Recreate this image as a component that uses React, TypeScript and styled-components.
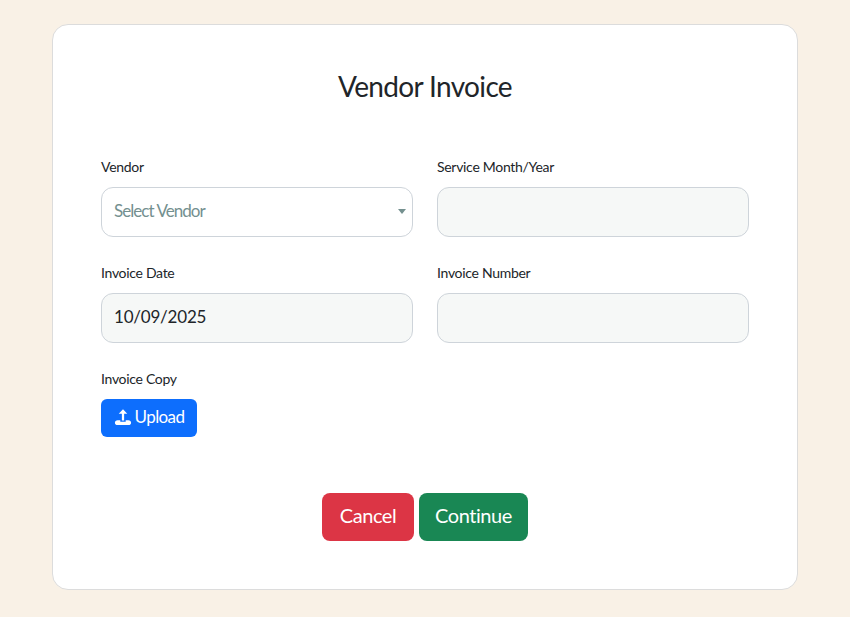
// App.tsx
import React from 'react';
import styled, { createGlobalStyle } from 'styled-components';

const GlobalStyle = createGlobalStyle`
  html, body {
    margin: 0;
    padding: 0;
    background: #f9f1e6;
    font-family: "Lato", "Liberation Sans", sans-serif;
  }
`;

const Page = styled.div`
  width: 850px;
  height: 617px;
  padding: 24px 52px 27px;
  box-sizing: border-box;
  overflow: hidden;
`;

const Card = styled.div`
  height: 566px;
  box-sizing: border-box;
  padding: 43px 48px 0;
  background: #fff;
  border: 1px solid #dcdcdc;
  border-radius: 16px;
`;

const Title = styled.h1`
  margin: 0 0 51px;
  height: 36px;
  font-size: 28px;
  line-height: 36px;
  font-weight: 400;
  letter-spacing: -0.65px;
  text-align: center;
  color: #212529;
`;

const FormGrid = styled.div`
  display: grid;
  grid-template-columns: 312px 312px;
  column-gap: 24px;
  row-gap: 24px;
`;

const Field = styled.div`
  display: flex;
  flex-direction: column;
`;

const Label = styled.label`
  height: 24px;
  margin-bottom: 8px;
  font-size: 14px;
  line-height: 24px;
  letter-spacing: -0.3px;
  color: #212529;
`;

const Input = styled.div<{ $filled?: boolean }>`
  position: relative;
  height: 50px;
  box-sizing: border-box;
  padding: 0 12px 3px;
  display: flex;
  align-items: center;
  font-size: 17px;
  letter-spacing: -0.2px;
  color: #212529;
  background: ${(p) => (p.$filled ? '#f6f8f7' : '#fff')};
  border: 1px solid #ced4da;
  border-radius: 12px;
`;

const Placeholder = styled.span`
  color: #74908f;
  font-size: 17px;
  letter-spacing: -0.95px;
`;

const Caret = styled.span`
  position: absolute;
  right: 6px;
  top: 21px;
  width: 0;
  height: 0;
  border-left: 4px solid transparent;
  border-right: 4px solid transparent;
  border-top: 5px solid #74908f;
`;

const UploadButton = styled.button`
  width: 96px;
  height: 38px;
  padding: 0 0 3px;
  display: flex;
  align-items: center;
  justify-content: center;
  gap: 3px;
  font: inherit;
  font-size: 17px;
  letter-spacing: -0.6px;
  color: #fff;
  background: #0d6efd;
  border: none;
  border-radius: 6px;
`;

const Actions = styled.div`
  display: flex;
  justify-content: center;
  gap: 5px;
  margin-top: 56px;
`;

const ActionButton = styled.button<{ $tone: string; $width: number }>`
  width: ${(p) => p.$width}px;
  height: 48px;
  padding: 0 0 4px;
  font: inherit;
  font-size: 20px;
  letter-spacing: -0.45px;
  color: #fff;
  background: ${(p) => p.$tone};
  border: none;
  border-radius: 8px;
`;

const UploadIcon = () => (
  <svg width="18" height="18" viewBox="0 0 16 16" fill="#fff">
    <path d="M8 1 L11.8 5 L9 5 L9 11 L7 11 L7 5 L4.2 5 Z" />
    <path d="M0.8 13 C0.8 11.7 1.8 10.9 3.2 10.9 L5.6 10.9 L5.6 12.2 L10.4 12.2 L10.4 10.9 L12.8 10.9 C14.2 10.9 15.2 11.7 15.2 13 C15.2 14.3 14.2 15.2 12.8 15.2 L3.2 15.2 C1.8 15.2 0.8 14.3 0.8 13 Z" />
  </svg>
);

const App: React.FC = () => {
  return (
    <Page>
      <GlobalStyle />
      <Card>
        <Title>Vendor Invoice</Title>
        <FormGrid>
          <Field>
            <Label>Vendor</Label>
            <Input>
              <Placeholder>Select Vendor</Placeholder>
              <Caret />
            </Input>
          </Field>
          <Field>
            <Label>Service Month/Year</Label>
            <Input $filled />
          </Field>
          <Field>
            <Label>Invoice Date</Label>
            <Input $filled>10/09/2025</Input>
          </Field>
          <Field>
            <Label>Invoice Number</Label>
            <Input $filled />
          </Field>
          <Field>
            <Label>Invoice Copy</Label>
            <UploadButton>
              <UploadIcon />
              Upload
            </UploadButton>
          </Field>
        </FormGrid>
        <Actions>
          <ActionButton $tone="#dc3545" $width={92}>Cancel</ActionButton>
          <ActionButton $tone="#198754" $width={109}>Continue</ActionButton>
        </Actions>
      </Card>
    </Page>
  );
};

export default App;
